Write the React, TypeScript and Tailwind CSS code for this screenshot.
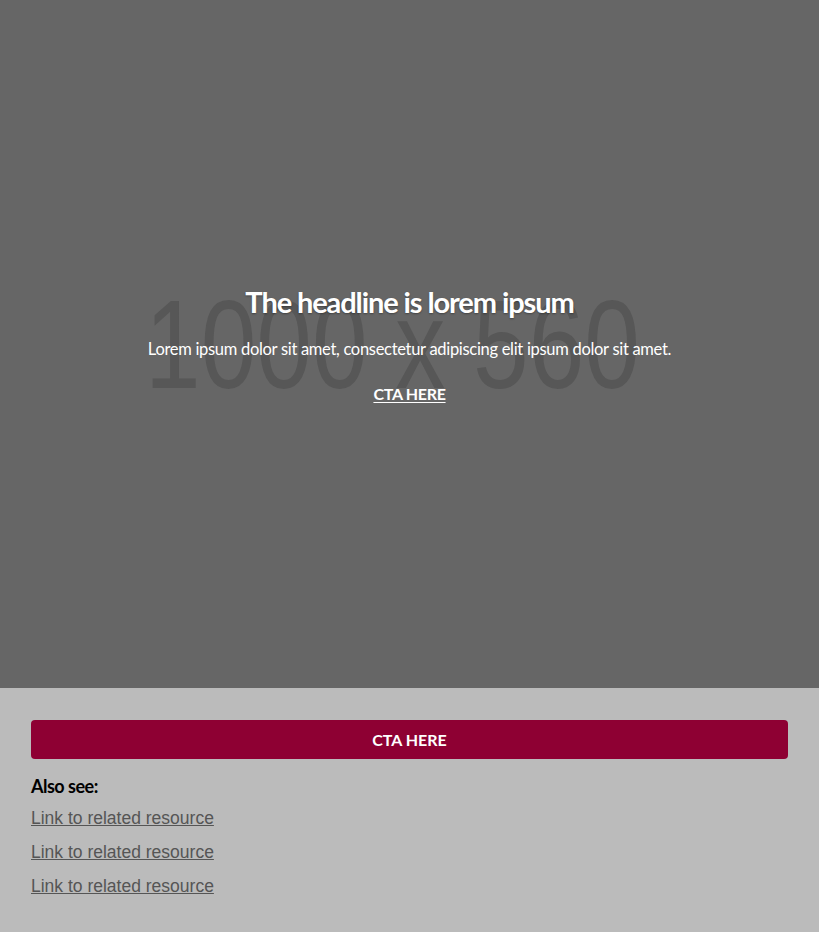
const links = ['Link to related resource', 'Link to related resource', 'Link to related resource'];

const Hero = () => {
  return (
    <div className="relative flex h-[688px] w-full items-center justify-center overflow-hidden bg-[#666666]">
      {/* placeholder label of the stretched image */}
      <div className="absolute inset-0 flex items-center justify-center pr-[34px]">
        <span className="origin-center scale-y-[1.26] font-['Liberation_Sans',Arial,sans-serif] text-[100px] leading-none text-[#575757]">
          1000 x 560
        </span>
      </div>
      <div className="relative flex flex-col items-center text-center font-['Lato','Open_Sans',sans-serif] text-white">
        <h1 className="text-[29px] font-bold leading-[34px] tracking-[-1.1px] [text-shadow:0_1px_2px_rgba(0,0,0,0.35)]">
          The headline is lorem ipsum
        </h1>
        <p className="mt-[18px] text-[16.5px] leading-[24px] tracking-[-0.3px]">
          Lorem ipsum dolor sit amet, consectetur adipiscing elit ipsum dolor sit amet.
        </p>
        <a href="#" className="mt-[23px] text-[16px] font-bold leading-[20px] tracking-[-0.3px] underline underline-offset-2">
          CTA HERE
        </a>
      </div>
    </div>
  );
};

export default function App() {
  return (
    <div className="min-h-[932px] w-full bg-[#bbbbbb]">
      <Hero />
      <div className="px-[31px] pt-[32px] pb-8">
        <button className="flex h-[39px] w-full items-center justify-center rounded-[4px] bg-[#8e0033] font-['Lato','Open_Sans',sans-serif] text-[16px] font-bold text-white">
          CTA HERE
        </button>
        <h3 className="mt-[16px] font-['Lato','Open_Sans',sans-serif] text-[18px] font-bold leading-[22px] tracking-[-0.5px] text-black">
          Also see:
        </h3>
        <ul className="mt-[11px] flex flex-col gap-[13px] font-['Liberation_Sans',Arial,sans-serif] text-[17.5px] leading-[21px]">
          {links.map((l, i) => (
            <li key={i}>
              <a href="#" className="text-[#555555] underline">
                {l}
              </a>
            </li>
          ))}
        </ul>
      </div>
    </div>
  );
}
